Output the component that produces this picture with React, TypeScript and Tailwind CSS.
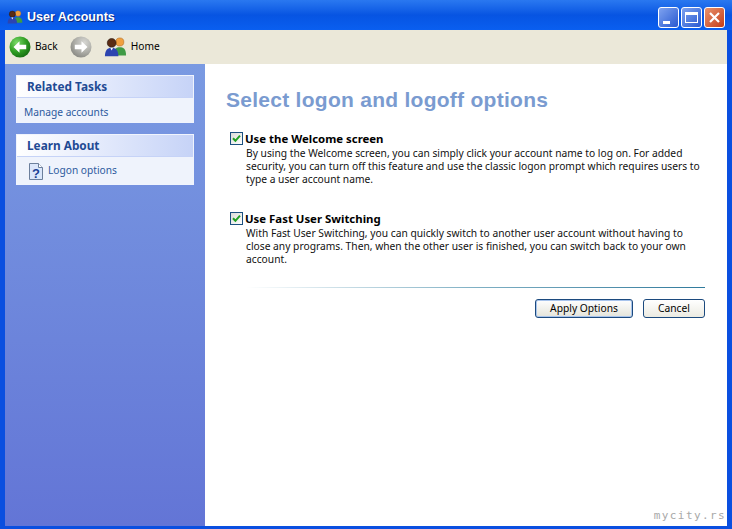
import React from 'react';

const Arrow: React.FC<{ flip?: boolean; colors: [string, string, string]; id: string }> = ({ flip, colors, id }) => (
  <svg width="22" height="22" viewBox="0 0 22 22" className={flip ? '-scale-x-100' : ''}>
    <defs>
      <radialGradient id={id} cx="0.35" cy="0.3" r="0.8">
        <stop offset="0" stopColor={colors[0]} />
        <stop offset="0.55" stopColor={colors[1]} />
        <stop offset="1" stopColor={colors[2]} />
      </radialGradient>
    </defs>
    <circle cx="11" cy="11" r="10.5" fill={`url(#${id})`} />
    <path d="M4.5 11 L10.5 5.2 L10.5 8.8 L17.2 8.8 L17.2 13.2 L10.5 13.2 L10.5 16.8 Z" fill="#fff" />
  </svg>
);

const UsersIcon: React.FC<{ size: number }> = ({ size }) => (
  <svg width={size} height={size * 0.85} viewBox="0 0 24 20">
    <circle cx="16.5" cy="5" r="4.2" fill="#f0a040" stroke="#b06a20" strokeWidth="0.6" />
    <path d="M10 19 C10 12 13 10.5 16.5 10.5 C20 10.5 23 12 23 19 Z" fill="#3f9a45" />
    <circle cx="8" cy="6" r="4.6" fill="#5a2c14" stroke="#201008" strokeWidth="0.6" />
    <path d="M1 20 C1 13 4 11 8 11 C12 11 15 13 15 20 Z" fill="#2c44b0" />
    <path d="M6.5 11 L8 14 L9.5 11 Z" fill="#fff" />
  </svg>
);

const HelpIcon = () => (
  <svg width="14" height="17" viewBox="0 0 14 17">
    <path d="M0.5 0.5 H9.5 L13.5 4.5 V16.5 H0.5 Z" fill="#dbe6fa" stroke="#6c7f9c" />
    <path d="M9.5 0.5 V4.5 H13.5" fill="#fff" stroke="#6c7f9c" />
    <text x="7" y="14.5" textAnchor="middle" fontSize="13" fontWeight="700" fill="#1c3f94" fontFamily="Liberation Sans, sans-serif">?</text>
  </svg>
);

const Check = () => (
  <span className="flex h-[13px] w-[13px] shrink-0 items-center justify-center border border-[#1c5180] bg-gradient-to-br from-[#dcdcd7] to-white">
    <svg width="9" height="9" viewBox="0 0 9 9">
      <path d="M1 4.2 L3.4 6.8 L8 1.6" fill="none" stroke="#21a121" strokeWidth="2" />
    </svg>
  </span>
);

const TaskBox: React.FC<{ title: string; children: React.ReactNode }> = ({ title, children }) => (
  <div className="border border-[#f0f4fd]">
    <div className="flex h-[21px] items-center bg-gradient-to-r from-white to-[#c6d3f7] pl-[10px] text-[11.8px] font-bold">
      <span className="text-[#1f4a94]">{title}</span>
    </div>
    <div className="border-t border-[#c6d3f7] bg-[#eff3fc] text-[10.2px] text-[#2d5a9e]">{children}</div>
  </div>
);

const OPTIONS = [
  {
    title: 'Use the Welcome screen',
    lines: [
      'By using the Welcome screen, you can simply click your account name to log on. For added',
      'security, you can turn off this feature and use the classic logon prompt which requires users to',
      'type a user account name.',
    ],
  },
  {
    title: 'Use Fast User Switching',
    lines: [
      'With Fast User Switching, you can quickly switch to another user account without having to',
      'close any programs. Then, when the other user is finished, you can switch back to your own',
      'account.',
    ],
  },
];

export default function App() {
  return (
    <div className="flex h-[529px] w-[732px] flex-col overflow-hidden bg-[#0a4fe0] font-['Noto_Sans',sans-serif] text-black">
      {/* Title bar */}
      <div className="flex h-[30px] shrink-0 items-center bg-gradient-to-b from-[#2a78f0] via-[#0754e2] to-[#0a5ff0] pl-[7px] pr-[7px] pt-[4px]">
        <UsersIcon size={16} />
        <span className="ml-[4px] font-['Liberation_Sans',sans-serif] text-[12.5px] font-bold text-white [text-shadow:1px_1px_#0a2a80]">User Accounts</span>
        <div className="ml-auto flex gap-[2px]">
          <div className="relative h-[21px] w-[21px] rounded-[3px] border border-white bg-gradient-to-br from-[#7fa2ef] to-[#2a58d0]">
            <span className="absolute bottom-[3px] left-[4px] h-[3px] w-[7px] bg-white" />
          </div>
          <div className="flex h-[21px] w-[21px] items-center justify-center rounded-[3px] border border-white bg-gradient-to-br from-[#7fa2ef] to-[#2a58d0]">
            <span className="h-[11px] w-[13px] border border-t-[3px] border-white" />
          </div>
          <div className="flex h-[21px] w-[21px] items-center justify-center rounded-[3px] border border-white bg-gradient-to-br from-[#e8926c] to-[#c33a14]">
            <svg width="13" height="13" viewBox="0 0 13 13">
              <path d="M2 2 L11 11 M11 2 L2 11" stroke="#fff" strokeWidth="2.2" />
            </svg>
          </div>
        </div>
      </div>

      <div className="mx-[5px] mb-[3px] flex min-h-0 flex-1 flex-col">
        {/* Toolbar */}
        <div className="flex h-[34px] shrink-0 items-center bg-[#ebe8d9] pl-[4px] text-[10.2px]">
          <Arrow id="back" colors={['#7ddb6a', '#2f9d22', '#12660f']} />
          <span className="ml-[4px]">Back</span>
          <div className="ml-[12px]">
            <Arrow id="fwd" flip colors={['#d8d8d4', '#aeaea8', '#84847e']} />
          </div>
          <div className="ml-[12px]">
            <UsersIcon size={23} />
          </div>
          <span className="ml-[4px]">Home</span>
        </div>

        <div className="flex min-h-0 flex-1">
          {/* Sidebar */}
          <div className="flex w-[200px] shrink-0 flex-col gap-[11px] bg-gradient-to-b from-[#7a9ae2] to-[#6375d6] px-[11px] pt-[11px]">
            <TaskBox title="Related Tasks">
              <div className="flex h-[24px] items-center pl-[7px] pt-[5px]">Manage accounts</div>
            </TaskBox>
            <TaskBox title="Learn About">
              <div className="flex h-[27px] items-center pl-[12px] pt-[1px]">
                <HelpIcon />
                <span className="ml-[5px]">Logon options</span>
              </div>
            </TaskBox>
          </div>

          {/* Main panel */}
          <div className="relative flex min-w-0 flex-1 flex-col bg-white pl-[21px] pr-[22px] pt-[23px]">
            <h1 className="font-['Liberation_Sans',sans-serif] text-[21px] font-bold leading-[26px] tracking-[0.27px] text-[#7a9bd0]">
              Select logon and logoff options
            </h1>
            <div className="mt-[18px] flex flex-col gap-[25px] pl-[4px]">
              {OPTIONS.map(opt => (
                <div key={opt.title}>
                  <div className="flex h-[14px] items-center gap-[2px]">
                    <Check />
                    <span className="relative top-[1px] text-[11.4px] font-bold">{opt.title}</span>
                  </div>
                  <div className="mt-[2px] pl-[16px] text-[10.25px] leading-[13px] text-[#111]">
                    {opt.lines.map(l => (
                      <div key={l} className="whitespace-nowrap">{l}</div>
                    ))}
                  </div>
                </div>
              ))}
            </div>
            <div className="ml-[20px] mt-[21px] h-px bg-gradient-to-r from-white via-[#7fb0c4] to-[#2f7a9c]" />
            <div className="mt-[11px] flex justify-end gap-[10px]">
              <button className="h-[19px] w-[98px] rounded-[3px] border border-[#1c4a7e] bg-gradient-to-b from-white to-[#e4e4da] text-[10.25px] leading-none shadow-[inset_0_0_0_1px_#a8c4ec]">
                Apply Options
              </button>
              <button className="h-[19px] w-[62px] rounded-[3px] border border-[#1c4a7e] bg-gradient-to-b from-white to-[#ecebe2] text-[10.25px] leading-none">
                Cancel
              </button>
            </div>
            <span className="absolute bottom-[2px] right-[1px] font-['DejaVu_Sans_Mono',monospace] text-[11px] tracking-[1.4px] text-[#a8a8a8]">mycity.rs</span>
          </div>
        </div>
      </div>
    </div>
  );
}
